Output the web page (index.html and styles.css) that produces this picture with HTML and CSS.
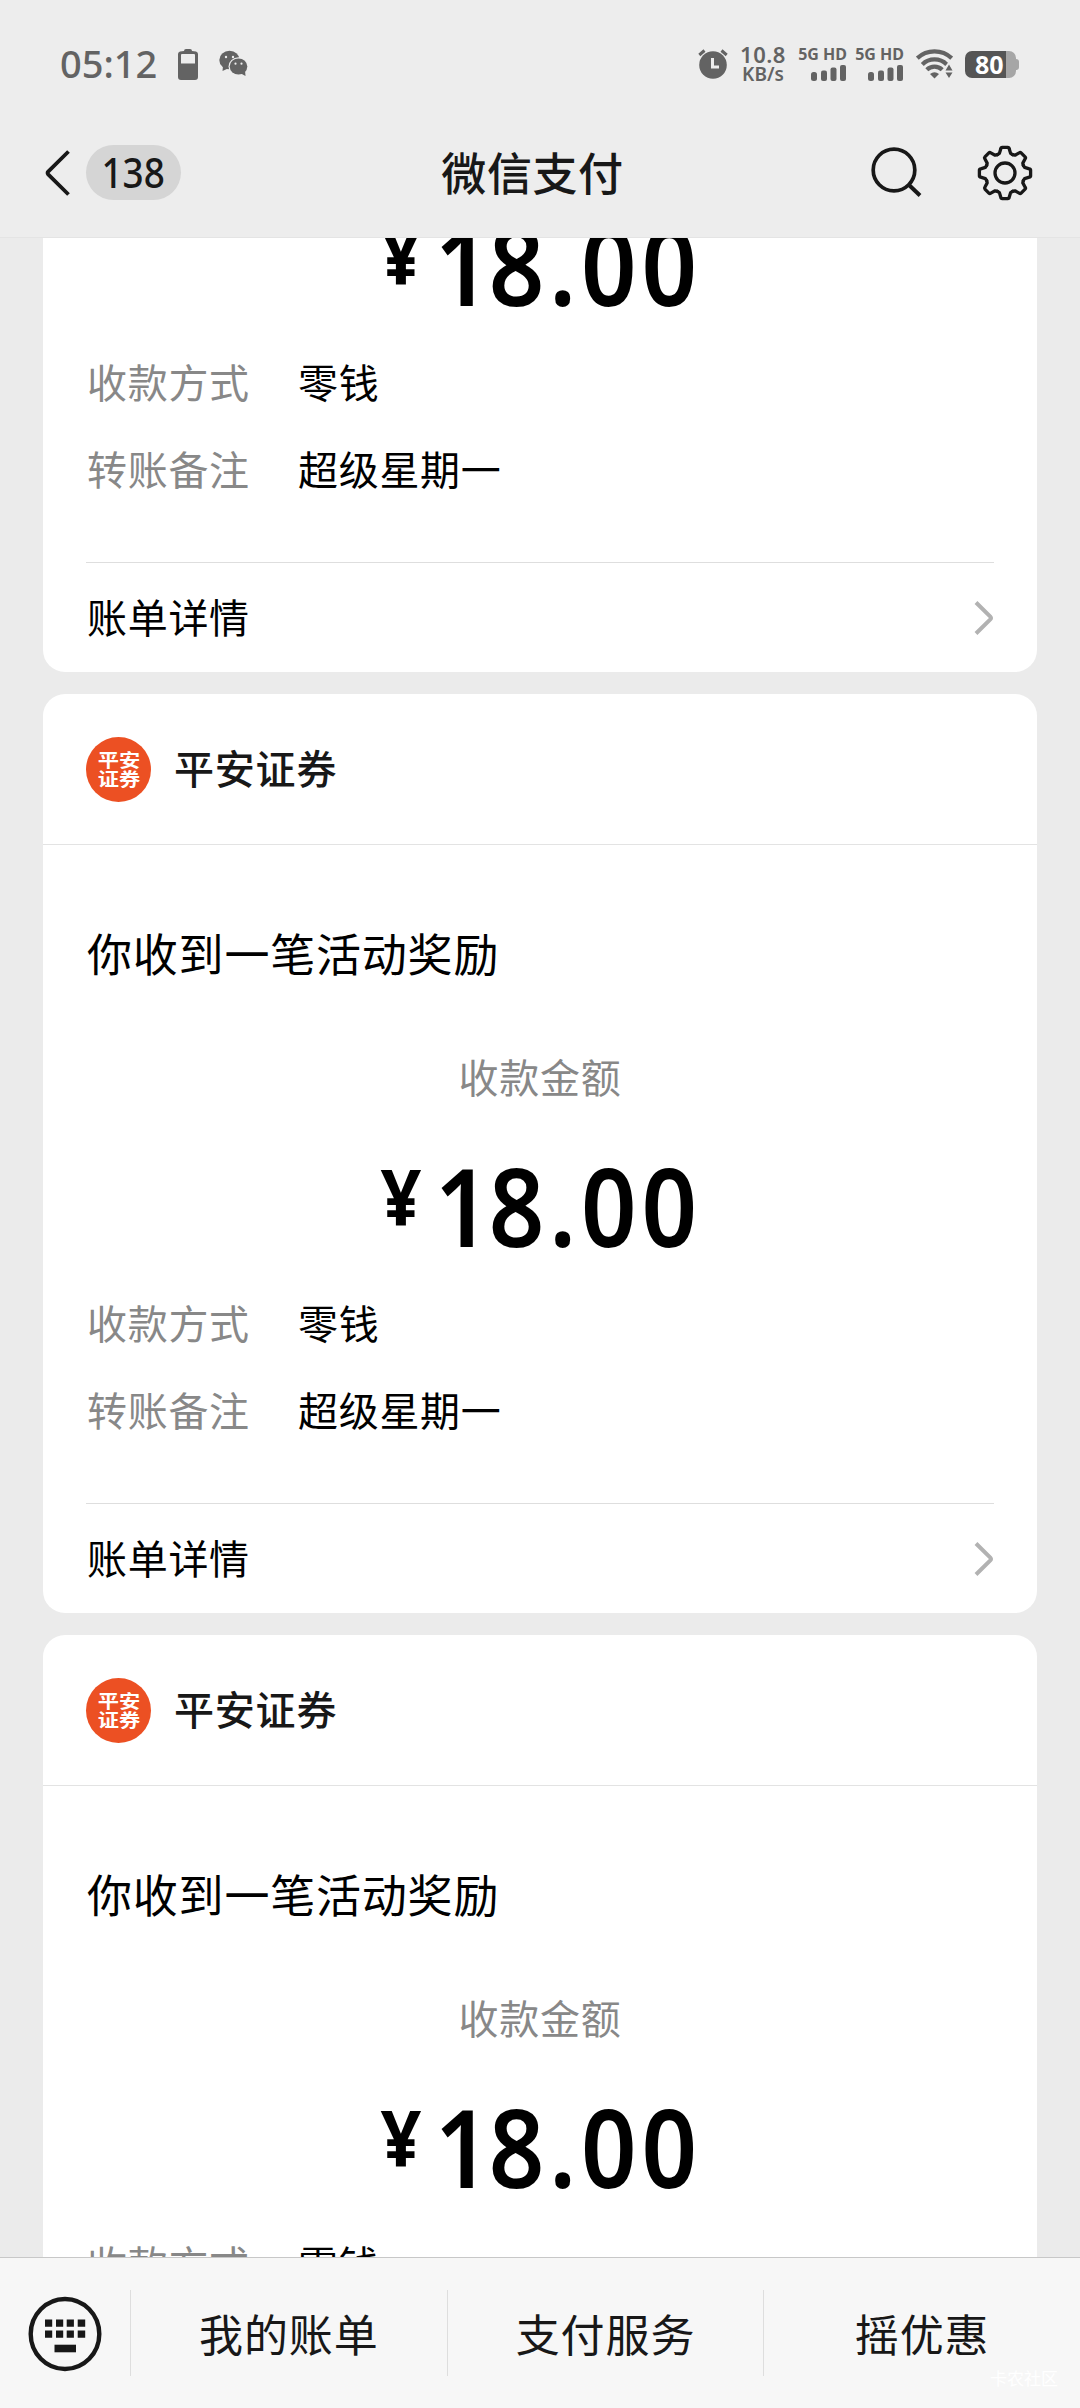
FILE: index.html
```html
<!DOCTYPE html>
<html lang="zh-CN">
<head>
<meta charset="utf-8">
<title>微信支付</title>
<link rel="stylesheet" href="styles.css">
</head>
<body>
<svg class="defs" width="0" height="0">
  <defs>
    <path id="tooth" d="M-7.6-18.3L-5.6-19.6L-4.2-24.3Q-4-25.6-2.8-25.6L2.8-25.6Q4-25.6 4.2-24.3L5.6-19.6L7.6-18.3"/>
    <symbol id="bars" viewBox="0 0 36 16">
      <rect x="0" y="7" width="6" height="9" rx="2.5"/>
      <rect x="10" y="5.500" width="6" height="10.500" rx="2"/>
      <rect x="19.500" y="2.500" width="6" height="13.500" rx="2"/>
      <rect x="29" y="0" width="6" height="16" rx="2"/>
    </symbol>
    <symbol id="chevron" viewBox="0 0 20 38">
      <path d="M2 3.500L16.300 17.600Q17.600 19 16.300 20.400L2 34.500" fill="none" stroke="#b2b2b2" stroke-width="4"/>
    </symbol>
  </defs>
</svg>
<div class="screen">
  <div class="status">
    <span class="clock">05:12</span>
    <svg class="low-battery" width="20" height="31" viewBox="0 0 20 31">
      <path d="M6 2Q6 0 8 0H12Q14 0 14 2L18 2.500Q20 3 20 5V28Q20 31 17 31H3Q0 31 0 28V5Q0 3 2 2.500ZM3 6V14.500H17V6Q17 5 16 5H4Q3 5 3 6Z" fill="#636363" fill-rule="evenodd"/>
    </svg>
    <svg class="wechat" width="30" height="28" viewBox="0 0 30 28">
      <path d="M4 16L3.500 21L9 18.500Z" fill="#636363"/>
      <ellipse cx="10.500" cy="10" rx="10.200" ry="9.200" fill="#636363"/>
      <ellipse cx="19.500" cy="16.500" rx="10" ry="9.200" fill="#ededed"/>
      <ellipse cx="19.500" cy="16.500" rx="8.800" ry="8" fill="#636363"/>
      <path d="M21 23L26.500 26L26 20.500Z" fill="#636363"/>
      <g fill="#ededed"><circle cx="7" cy="7" r="1.200"/><circle cx="14" cy="7" r="1.200"/><circle cx="16.500" cy="13.700" r="1.100"/><circle cx="22.500" cy="13.700" r="1.100"/></g>
    </svg>
    <div class="status-right">
      <svg class="alarm" width="30" height="30" viewBox="0 0 30 30">
        <circle cx="15" cy="16" r="13.800" fill="#636363"/>
        <path d="M1.300 6L6.500 1.500M28.700 6L23.500 1.500" stroke="#636363" stroke-width="3" fill="none"/>
        <path d="M14.500 9V18H21" stroke="#ededed" stroke-width="3" fill="none"/>
      </svg>
      <div class="speed"><span class="speed-num">10.8</span><span class="speed-unit">KB/s</span></div>
      <div class="signal"><span>5G HD</span><svg width="36" height="16" fill="#636363"><use href="#bars"/></svg></div>
      <div class="signal"><span>5G HD</span><svg width="36" height="16" fill="#636363"><use href="#bars"/></svg></div>
      <svg class="wifi" width="37" height="30" viewBox="0 0 37 30">
        <g fill="none" stroke="#636363" stroke-width="4.200">
          <path d="M1.300 9.200A25 25 0 0 1 35.700 9.200"/>
          <path d="M6.300 15.400A17.500 17.500 0 0 1 30.700 15.400"/>
          <path d="M10.800 20.800A11 11 0 0 1 26.200 20.800"/>
        </g>
        <path d="M14 25Q18.500 21.500 23 25L18.500 29.500Z" fill="#636363"/>
        <path d="M26.500 23L33 12L38 16V30H28Z" fill="#ededed"/>
        <path d="M29.500 21.500L33 15.500L36.500 21.500ZM29.500 23.500H36.500L33 29Z" fill="#636363"/>
      </svg>
      <div class="battery"><span>80</span></div>
    </div>
  </div>

  <div class="nav">
    <div class="nav-left">
      <svg class="back" width="26" height="46" viewBox="0 0 26 46">
        <path d="M23.500 1.500L3.200 21.600Q2 23 3.200 24.400L23.500 44.500" fill="none" stroke="#181818" stroke-width="3.800"/>
      </svg>
      <span class="unread"><span>138</span></span>
    </div>
    <h1 class="title">微信支付</h1>
    <div class="nav-right">
      <svg class="search" width="52" height="52" viewBox="0 0 52 52">
        <circle cx="23" cy="23" r="20.800" fill="none" stroke="#181818" stroke-width="3.700"/>
        <path d="M37.500 37.500L49 48.500" stroke="#181818" stroke-width="4"/>
      </svg>
      <svg class="gear" width="56" height="56" viewBox="-28 -28 56 56">
        <g fill="none" stroke="#181818" stroke-width="3.300" stroke-linejoin="round" stroke-linecap="round">
          <circle r="10"/>
          <use href="#tooth"/><use href="#tooth" transform="rotate(45)"/><use href="#tooth" transform="rotate(90)"/><use href="#tooth" transform="rotate(135)"/><use href="#tooth" transform="rotate(180)"/><use href="#tooth" transform="rotate(225)"/><use href="#tooth" transform="rotate(270)"/><use href="#tooth" transform="rotate(315)"/>
        </g>
      </svg>
    </div>
  </div>

  <div class="feed">
    <section class="card card-scrolled">
      <div class="card-body">
        <p class="amount"><span class="yen">¥</span><span class="digits">18.00</span></p>
        <dl class="rows">
          <div class="row"><dt>收款方式</dt><dd>零钱</dd></div>
          <div class="row"><dt>转账备注</dt><dd>超级星期一</dd></div>
        </dl>
      </div>
      <div class="card-foot"><span>账单详情</span><svg width="20" height="38"><use href="#chevron"/></svg></div>
    </section>

    <section class="card">
      <div class="card-head"><span class="logo"><span>平安</span><span>证券</span></span><span class="brand">平安证券</span></div>
      <div class="card-body">
        <h2 class="headline">你收到一笔活动奖励</h2>
        <p class="caption">收款金额</p>
        <p class="amount"><span class="yen">¥</span><span class="digits">18.00</span></p>
        <dl class="rows">
          <div class="row"><dt>收款方式</dt><dd>零钱</dd></div>
          <div class="row"><dt>转账备注</dt><dd>超级星期一</dd></div>
        </dl>
      </div>
      <div class="card-foot"><span>账单详情</span><svg width="20" height="38"><use href="#chevron"/></svg></div>
    </section>

    <section class="card">
      <div class="card-head"><span class="logo"><span>平安</span><span>证券</span></span><span class="brand">平安证券</span></div>
      <div class="card-body">
        <h2 class="headline">你收到一笔活动奖励</h2>
        <p class="caption">收款金额</p>
        <p class="amount"><span class="yen">¥</span><span class="digits">18.00</span></p>
        <dl class="rows">
          <div class="row"><dt>收款方式</dt><dd>零钱</dd></div>
        </dl>
      </div>
    </section>
  </div>

  <div class="menu">
    <div class="keyboard">
      <svg width="74" height="76" viewBox="-37 -38 74 76">
        <ellipse rx="34.300" ry="35" fill="none" stroke="#181818" stroke-width="4.400"/>
        <g fill="#181818">
          <path d="M-20-14.500h7.200v7.200h-7.200zM-9-14.500h7.200v7.200h-7.200zM1.700-14.500h7.200v7.200h-7.200zM12.700-14.500h7.500v7.200h-7.500z"/>
          <path d="M-20-3.500h7.200v7.200h-7.200zM-9-3.500h7.200v7.200h-7.200zM1.700-3.500h7.200v7.200h-7.200zM12.700-3.500h7.500v7.200h-7.500z"/>
          <path d="M-10.500 10.700h21.500v7.600h-21.500z"/>
        </g>
      </svg>
    </div>
    <div class="menu-item">我的账单</div>
    <div class="menu-item">支付服务</div>
    <div class="menu-item">摇优惠</div>
    <span class="watermark">卡农社区</span>
  </div>
</div>
</body>
</html>
```
FILE: styles.css
```css
* { box-sizing: border-box; margin: 0; padding: 0; }

body {
  background: #ededed;
  font-family: "Noto Sans CJK SC", sans-serif;
  color: #000;
}

.defs { display: block; position: absolute; }
svg { display: block; flex: none; }

.screen {
  width: 1080px;
  height: 2408px;
  display: flex;
  flex-direction: column;
  overflow: hidden;
}

/* status bar */
.status {
  height: 112px;
  flex: none;
  padding: 16px 61px 0 60px;
  display: flex;
  align-items: center;
  color: #636363;
  font-family: "Noto Sans", sans-serif;
}
.clock { width: 118px; font-size: 38px; font-weight: 500; line-height: 50px; white-space: nowrap; padding-bottom: 2px; }
.wechat { margin-left: 21px; }
.status-right { margin-left: auto; display: flex; align-items: center; }
.speed { width: 46px; margin-left: 12px; display: flex; flex-direction: column; align-items: center; font-weight: 600; }
.speed-num { font-size: 22px; line-height: 19px; letter-spacing: 0.5px; }
.speed-unit { font-size: 19px; line-height: 20px; font-weight: 600; }
.signal { width: 48px; margin-left: 13px; display: flex; flex-direction: column; align-items: flex-end; gap: 4px; }
.signal + .signal { margin-left: 9px; }
.signal span { font-size: 16px; line-height: 14px; font-weight: 700; white-space: nowrap; }
.wifi { margin-left: 12px; }
.battery {
  position: relative;
  width: 51px;
  height: 27px;
  margin: 0 3px 0 12px;
  border-radius: 7px;
  background: linear-gradient(90deg, #555 41px, #a6a6a6 41px);
  color: #fff;
  font-size: 25px;
  font-weight: 700;
  line-height: 27px;
  padding-left: 10px;
}
.battery::after {
  content: "";
  position: absolute;
  left: 51px;
  top: 8px;
  width: 3px;
  height: 11px;
  border-radius: 0 3px 3px 0;
  background: #a6a6a6;
}

/* navigation bar */
.nav {
  height: 126px;
  flex: none;
  padding: 0 47px 4px 45px;
  display: grid;
  grid-template-columns: 300px 1fr 300px;
  align-items: center;
  border-bottom: 1px solid #e4e4e4;
}
.nav-left { display: flex; align-items: center; gap: 15px; }
.nav-right { display: flex; align-items: center; justify-content: flex-end; gap: 54px; }
.unread {
  height: 55px;
  width: 95px;
  border-radius: 28px;
  background: #d5d5d5;
  color: #181818;
  font: 500 41px/55px "Noto Sans", sans-serif;
  text-align: center;
}
.unread span { display: inline-block; transform: scaleX(0.9); }
.title {
  color: #181818;
  font-size: 45px;
  font-weight: 500;
  line-height: 60px;
  letter-spacing: 0.600px;
  text-align: center;
  margin-left: -13px;
  padding-bottom: 2px;
}

/* message cards */
.feed {
  flex: 1;
  min-height: 0;
  overflow: hidden;
  padding: 0 43px;
  background: #ebebeb;
}
.card { background: #fff; border-radius: 22px; margin-bottom: 22px; }
.card-scrolled { border-radius: 0 0 22px 22px; }
.card-head {
  height: 151px;
  padding: 0 43px;
  display: flex;
  align-items: center;
  border-bottom: 1px solid #e3e3e3;
}
.logo {
  width: 65px;
  height: 65px;
  border-radius: 50%;
  background: #ec5023;
  color: #fff;
  display: flex;
  flex-direction: column;
  align-items: center;
  justify-content: center;
  font-size: 18px;
  font-weight: 700;
  line-height: 19px;
}
.logo span { transform: scaleX(1.18); }
.brand { margin-left: 23px; color: #181818; font-size: 40px; font-weight: 500; letter-spacing: 0.800px; line-height: 60px; margin-top: -4px; }
.card-body { padding: 78px 44px 69px; }
.card-scrolled .card-body { padding-top: 0; }
.headline { font-size: 45px; font-weight: 400; line-height: 60px; letter-spacing: 0.800px; }
.caption { margin-top: 68px; color: #888; font-size: 40px; line-height: 50px; letter-spacing: 0.700px; text-align: center; }
.amount {
  margin-top: 50px;
  height: 108px;
  display: flex;
  justify-content: center;
  font: 600 108px/110px "Noto Sans", sans-serif;
  white-space: nowrap;
}
.yen { font-size: 77px; font-weight: 700; line-height: 90px; margin-right: 12px; transform: scaleX(0.93); }
.digits { letter-spacing: 5.500px; margin: 0 -16px 0 -15px; transform: scaleX(0.9); }
.digits::first-letter { letter-spacing: -2px; }
.card-scrolled .amount { margin-top: -28px; clip-path: inset(28px 0 0 0); }
.rows { margin-top: 38px; display: grid; gap: 37px; }
.row { display: grid; grid-template-columns: 211px 1fr; font-size: 40px; line-height: 50px; letter-spacing: 0.700px; }
.row dt { color: #888; }
.card-foot {
  height: 110px;
  margin: 0 43px;
  padding-left: 1px;
  display: flex;
  align-items: center;
  justify-content: space-between;
  border-top: 1px solid #dedede;
  font-size: 40px;
  letter-spacing: 0.700px;
}
.card-foot span { margin-top: -3px; }

/* bottom menu */
.menu {
  position: relative;
  height: 151px;
  flex: none;
  display: grid;
  grid-template-columns: 130px repeat(3, 1fr);
  align-items: center;
  background: #f7f7f7;
  border-top: 1px solid #c8c8c8;
}
.keyboard { padding: 2px 0 0 28px; }
.menu-item {
  height: 86px;
  line-height: 86px;
  border-left: 1px solid #dedede;
  color: #181818;
  font-size: 44px;
  letter-spacing: 0.900px;
  text-align: center;
}
.watermark {
  position: absolute;
  right: 22px;
  bottom: 18px;
  color: #fff;
  font-size: 17px;
  line-height: 24px;
}
```
